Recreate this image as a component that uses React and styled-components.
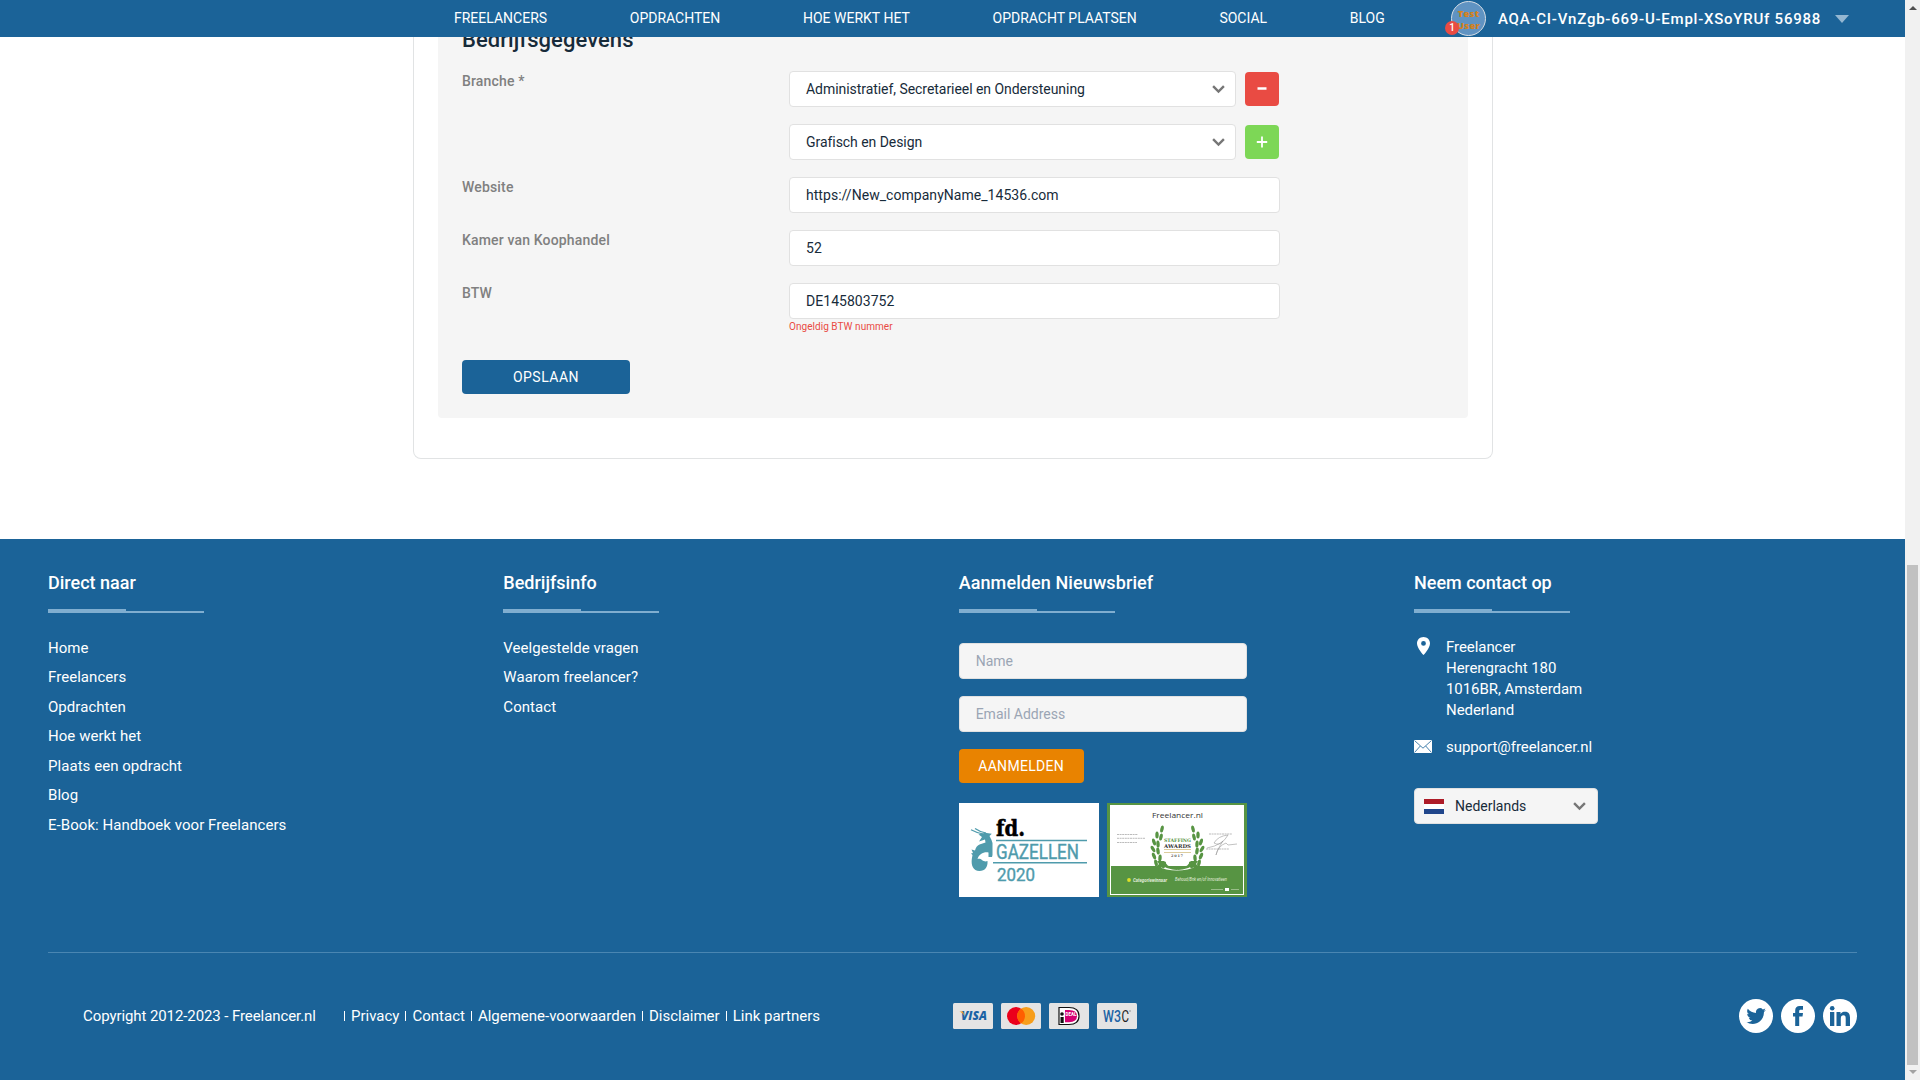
import React from 'react';
import styled, { createGlobalStyle } from 'styled-components';

const Global = createGlobalStyle`
  * { box-sizing: border-box; }
  html, body { margin: 0; padding: 0; }
  body { font-family: Roboto, "Liberation Sans", sans-serif; background: #fff; overflow: hidden; }
  button, input { font-family: inherit; }
`;

const Screen = styled.div`
  width: 1920px;
  height: 1080px;
  display: flex;
  overflow: hidden;
`;

const Page = styled.div`
  width: 1905px;
  height: 1080px;
  display: flex;
  flex-direction: column;
`;

const Header = styled.header`
  flex: none;
  height: 37px;
  background: #1b6398;
  display: flex;
  align-items: center;
  padding-left: 454px;
  position: relative;
  z-index: 2;
`;

const Nav = styled.nav`
  display: flex;
  gap: 82.7px;
  width: 997px;
  margin-bottom: 1px;
`;

const NavLink = styled.a`
  color: #fff;
  font-size: 14px;
  line-height: 20px;
  white-space: nowrap;
`;

const UserBox = styled.div`
  display: flex;
  align-items: center;
`;

const Avatar = styled.div`
  position: relative;
  width: 35px;
  height: 35px;
  border-radius: 50%;
  border: 1px solid #d6dde4;
  background: #6093c2;
  color: #d5811c;
  font: 800 9.5px/12px "Open Sans", sans-serif;
  letter-spacing: 0.2px;
  text-align: center;
  padding-top: 6px;
`;

const Badge = styled.span`
  position: absolute;
  left: -7px;
  top: 19px;
  width: 14px;
  height: 14px;
  border-radius: 50%;
  background: #e94b43;
  color: #fff;
  font: 500 10px/14px Roboto, sans-serif;
  letter-spacing: 0;
`;

const UserName = styled.span`
  margin-left: 12px;
  width: 324px;
  white-space: nowrap;
  color: #fff;
  font-size: 15px;
  font-weight: 500;
  letter-spacing: 0.76px;
`;

const Caret = styled.span`
  margin-left: 13px;
  margin-top: 1px;
  border: 7px solid transparent;
  border-top: 8px solid #94b7d2;
  border-bottom: 0;
`;

const Main = styled.main`
  flex: none;
  height: 502px;
  padding-left: 413px;
`;

const Card = styled.section`
  width: 1080px;
  height: 422px;
  border: 1px solid #e1e3e4;
  border-top: 0;
  border-radius: 0 0 8px 8px;
  padding: 0 24px;
`;

const Panel = styled.div`
  display: flow-root;
  height: 381px;
  background: #f5f5f5;
  border-radius: 0 0 4px 4px;
  padding: 0 24px;
`;

const Heading = styled.h2`
  margin: -12px 0 0;
  height: 46px;
  font-size: 22px;
  line-height: 30px;
  font-weight: 500;
  letter-spacing: 0.06px;
  color: #172b3a;
`;

const Row = styled.div`
  display: flex;
  align-items: flex-start;
  margin-bottom: 17px;
`;

const Label = styled.label`
  width: 327px;
  color: #808080;
  font-size: 14px;
  line-height: 20px;
  font-weight: 500;
  letter-spacing: 0.16px;
`;

const Control = styled.div`
  display: flex;
  align-items: center;
  justify-content: space-between;
  width: ${(p) => (p.$short ? 447 : 491)}px;
  height: 36px;
  border: 1px solid #e1e1e1;
  border-radius: 4px;
  background: #fff;
  color: #172b3a;
  font-size: 14px;
  letter-spacing: ${(p) => (p.$short ? -0.05 : 0.04)}px;
  padding: 0 10px 0 16px;
`;

const SquareButton = styled.button`
  width: 34px;
  height: 34px;
  margin: 1px 0 0 9px;
  border: 0;
  border-radius: 4px;
  background: ${(p) => p.$color};
  display: flex;
  align-items: center;
  justify-content: center;
  padding: 0;
`;

const ErrorRow = styled.div`
  margin: -15px 0 0 327px;
  height: 39px;
  color: #e94b43;
  font-size: 10px;
  line-height: 12px;
  letter-spacing: 0.05px;
`;

const ActionButton = styled.button`
  display: block;
  width: ${(p) => p.$width}px;
  height: 34px;
  border: 0;
  border-radius: 4px;
  background: ${(p) => p.$color};
  color: #fff;
  font-size: 14px;
  letter-spacing: ${(p) => p.$spacing}px;
  padding: 0;
`;

const Footer = styled.footer`
  flex: none;
  height: 541px;
  background: #1b6398;
  color: #fff;
  padding: 32px 48px 0;
`;

const Columns = styled.div`
  display: grid;
  grid-template-columns: repeat(4, 455.33px);
  height: 381px;
`;

const Column = styled.div`
  display: flex;
  flex-direction: column;
  align-items: flex-start;
`;

const Title = styled.h3`
  margin: 0;
  font-size: 18px;
  line-height: 24px;
  font-weight: 500;
  letter-spacing: ${(p) => p.$spacing || 0}px;
`;

const Rule = styled.div`
  width: 156px;
  height: 4px;
  margin-top: 14px;
  border-bottom: 2px solid #80aed0;
  &::before {
    content: '';
    display: block;
    width: 78px;
    height: 2px;
    background: #80aed0;
  }
`;

const Links = styled.div`
  display: flex;
  flex-direction: column;
  padding-top: 20.6px;
`;

const FooterLink = styled.a`
  color: #fff;
  font-size: 15px;
  line-height: 29.5px;
  letter-spacing: 0.05px;
`;

const Field = styled.input`
  width: 288px;
  height: 36px;
  margin-bottom: 17px;
  border: 1px solid #e1e1e1;
  border-radius: 4px;
  background: #f5f5f5;
  font-size: 14px;
  padding: 0 16px;
  &::placeholder { color: #9ba5b4; opacity: 1; }
`;

const Newsletter = styled.form`
  display: flex;
  flex-direction: column;
  align-items: flex-start;
  padding-top: 30px;
`;

const Awards = styled.div`
  display: flex;
  gap: 8px;
  margin-top: 20px;
`;

const Contact = styled.div`
  display: grid;
  grid-template-columns: 32px auto;
  font-size: 15px;
  line-height: 21px;
  letter-spacing: -0.06px;
  margin-top: ${(p) => p.$gap}px;
  svg { margin-top: ${(p) => p.$icon}px; }
`;

const Language = styled.div`
  display: flex;
  align-items: center;
  width: 184px;
  height: 36px;
  margin-top: 30px;
  padding: 0 11px 0 9px;
  border: 1px solid #e1e1e1;
  border-radius: 4px;
  background: #f5f5f5;
  color: #172b3a;
  font-size: 14px;
  span { flex: 1; padding-left: 11px; }
`;

const Bottom = styled.div`
  display: flex;
  align-items: center;
  height: 127px;
  border-top: 1px solid #4a86b2;
  padding-left: 35px;
`;

const Copyright = styled.div`
  width: 261px;
  font-size: 15px;
  letter-spacing: -0.09px;
  white-space: nowrap;
`;

const Legal = styled.div`
  display: flex;
  width: 609px;
  font-size: 15px;
`;

const LegalLink = styled.a`
  display: flex;
  align-items: center;
  white-space: nowrap;
  margin-right: 6px;
  &::before {
    content: '';
    width: 1px;
    height: 10px;
    margin-right: 6px;
    background: #fff;
  }
`;

const Payments = styled.div`
  display: flex;
  gap: 8px;
  flex: 1;
  svg { display: block; }
`;

const Social = styled.div`
  display: flex;
  gap: 8px;
  svg { display: block; }
`;

const Scrollbar = styled.div`
  width: 15px;
  height: 1080px;
  background: #f1f1f1;
  display: flex;
  flex-direction: column;
  align-items: center;
`;

const Arrow = styled.i`
  border: 4px solid transparent;
  ${(p) => (p.$up
    ? 'border-top: 0; border-bottom-color: #505050; border-bottom-width: 4px; margin-top: 6px;'
    : 'border-bottom: 0; border-top-color: #a3a3a3; margin-top: 5px;')}
`;

const Thumb = styled.div`
  width: 11px;
  height: 500px;
  margin-top: 555px;
  background: #c1c1c1;
`;

const Chevron = () => (
  <svg width="13" height="10" viewBox="0 0 13 10" fill="none" stroke="#767676" strokeWidth="2.4">
    <path d="M1.100 2.200 6.500 7.600 11.900 2.200" />
  </svg>
);

const GazellenLogo = () => (
  <svg width="140" height="94" viewBox="0 0 140 94">
    <rect width="140" height="94" fill="#fff" />
    <text x="37" y="33" fontFamily="DejaVu Serif, serif" fontWeight="700" fontSize="23" stroke="#000" strokeWidth=".5" textLength="29" lengthAdjust="spacingAndGlyphs">fd.</text>
    <path d="M37 37.500H128M34 59.700H128" stroke="#4f9bac" strokeWidth="1.600" />
    <g fill="#4f9bac" fontFamily="Roboto, sans-serif" fontWeight="400" fontSize="20" stroke="#4f9bac" strokeWidth=".4">
      <text x="37" y="56" textLength="83" lengthAdjust="spacingAndGlyphs">GAZELLEN</text>
      <text x="38" y="77.500" fontSize="18.500" textLength="38" lengthAdjust="spacingAndGlyphs">2020</text>
    </g>
    <path d="M12 26.800Q18 30 24 31M16 25.500Q21 29 27 30" fill="none" stroke="#4f9bac" strokeWidth="1.200" />
    <path fill="#4f9bac" d="M19.500 31.500 26 29.800 32.800 30.800 30.500 33 32.500 37 33.500 40V52L33 54H29.500V49.500C25 48.500 20 51 18.500 56C20 55.500 22 56 23 57C25 58.500 26.500 58.800 28.500 58C29 64 26 68 20.500 68C14 68 12 62 12.800 56L13.500 52 12 50.500 14 50 12.500 46.500 16 47.500Q17 43 20.500 41.500L26.500 39.500 26 36.500 20 38.500 23 34Z" />
  </svg>
);

const leaves = [[53, 66, 20], [49, 60, 5], [47, 53, -5], [46, 46, -12], [47, 39, 0], [50, 32, 18], [55, 26, 30], [57, 62, 35], [53, 55, 22], [51, 48, 10], [51, 41, 15], [54, 34, 30]];

const StaffingAward = () => (
  <svg width="140" height="94" viewBox="0 0 140 94">
    <rect width="140" height="94" fill="#579443" />
    <rect x="3.500" y="2.500" width="133" height="89" fill="none" stroke="#fff" strokeWidth="1" />
    <rect x="4" y="3" width="132" height="60" fill="#fff" />
    <text x="45" y="15" fontFamily="Open Sans, sans-serif" fontSize="8" fill="#333" textLength="51" lengthAdjust="spacingAndGlyphs">Freelancer.nl</text>
    <path d="M52 57Q70 76 88 57L91 63Q70 72 49 63Z" fill="#fff" />
    {[false, true].map((flip) => (
      <g key={String(flip)} fill="#579443" transform={flip ? 'matrix(-1 0 0 1 141 0)' : undefined}>
        {leaves.map(([x, y, a]) => (
          <ellipse key={`${x}-${y}`} cx={x} cy={y} rx="1.700" ry="3.600" transform={`rotate(${a - 18} ${x} ${y})`} />
        ))}
        <path d="M53 57Q60 64 70.500 65V67Q60 67 51 60ZM50 58H57L62 64H49L52 61Z" />
      </g>
    ))}
    <g textAnchor="middle" fontFamily="DejaVu Serif, serif" fontWeight="700">
      <text x="70.500" y="39" fontSize="4.800" fill="#579443" textLength="27" lengthAdjust="spacingAndGlyphs">STAFFING</text>
      <text x="70.500" y="44.700" fontSize="5.200" fill="#333" textLength="27" lengthAdjust="spacingAndGlyphs">AWARDS</text>
      <text x="70" y="54" fontSize="3.500" fill="#555" textLength="12">2017</text>
    </g>
    <path d="M57 46.500H84M57 49.500H84" stroke="#c5a95b" strokeWidth=".6" />
    <path d="M10 31.500H31M10 35.300H38M10 39.500H30M102 31H125M99 46H122" stroke="#aaa" strokeWidth=".8" strokeDasharray="2 .6" />
    <path d="M100 45Q116 42 121 32Q111 33 107 40Q112 43 116 38Q110 47 109 52Q111 43 119 40L121 42 130 41" fill="none" stroke="#999" strokeWidth=".6" />
    <circle cx="22" cy="77" r="1.900" fill="#dddf27" />
    <g fill="#e1ecdc" fontFamily="Roboto, sans-serif" fontStyle="italic">
      <text x="26" y="78.500" fontSize="4.700" fontWeight="700" textLength="34" lengthAdjust="spacingAndGlyphs">Categoriewinnaar</text>
      <text x="68" y="78.300" fontSize="4.500" textLength="52" lengthAdjust="spacingAndGlyphs">Behoud/Bnk en/of Innovatieen</text>
    </g>
    <path d="M104 86.500H116M124 86.500H132" stroke="#a9c99c" strokeWidth=".8" />
    <path d="M118 85H122V88H118Z" fill="#fff" />
  </svg>
);

const CardBase = ({ children }) => (
  <svg width="40" height="26" viewBox="0 0 40 26">
    <rect width="40" height="26" rx="1.500" fill="#e4e4e4" />
    {children}
  </svg>
);

const fields = [
  ['Website', 'https://New_companyName_14536.com'],
  ['Kamer van Koophandel', '52'],
  ['BTW', 'DE145803752'],
];

export default function App() {
  return (
    <Screen>
      <Global />
      <Page>
        <Header>
          <Nav>
            {['FREELANCERS', 'OPDRACHTEN', 'HOE WERKT HET', 'OPDRACHT PLAATSEN', 'SOCIAL', 'BLOG'].map((t) => (
              <NavLink key={t}>{t}</NavLink>
            ))}
          </Nav>
          <UserBox>
            <Avatar>Test<br />User<Badge>1</Badge></Avatar>
            <UserName>AQA-CI-VnZgb-669-U-Empl-XSoYRUf 56988</UserName>
            <Caret />
          </UserBox>
        </Header>
        <Main>
          <Card>
            <Panel>
              <Heading>Bedrijfsgegevens</Heading>
              <Row>
                <Label>Branche *</Label>
                <Control $short>Administratief, Secretarieel en Ondersteuning<Chevron /></Control>
                <SquareButton $color="#e94b43" aria-label="Verwijderen">
                  <svg width="12" height="12" viewBox="0 0 12 12"><path d="M1.500 5.500H10.500" stroke="#fff" strokeWidth="2.500" /></svg>
                </SquareButton>
              </Row>
              <Row>
                <Label />
                <Control $short>Grafisch en Design<Chevron /></Control>
                <SquareButton $color="#7dd756" aria-label="Toevoegen">
                  <svg width="12" height="12" viewBox="0 0 12 12"><path d="M.8 6H11.200M6 .4V11.600" stroke="#fff" strokeWidth="1.800" /></svg>
                </SquareButton>
              </Row>
              {fields.map(([label, value]) => (
                <Row key={label}>
                  <Label>{label}</Label>
                  <Control>{value}</Control>
                </Row>
              ))}
              <ErrorRow>Ongeldig BTW nummer</ErrorRow>
              <ActionButton $width={168} $color="#1b6398" $spacing={0.5}>OPSLAAN</ActionButton>
            </Panel>
          </Card>
        </Main>
        <Footer>
          <Columns>
            <Column>
              <Title>Direct naar</Title>
              <Rule />
              <Links>
                {['Home', 'Freelancers', 'Opdrachten', 'Hoe werkt het', 'Plaats een opdracht', 'Blog', 'E-Book: Handboek voor Freelancers'].map((t) => (
                  <FooterLink key={t}>{t}</FooterLink>
                ))}
              </Links>
            </Column>
            <Column>
              <Title>Bedrijfsinfo</Title>
              <Rule />
              <Links>
                {['Veelgestelde vragen', 'Waarom freelancer?', 'Contact'].map((t) => (
                  <FooterLink key={t}>{t}</FooterLink>
                ))}
              </Links>
            </Column>
            <Column>
              <Title $spacing={0.1}>Aanmelden Nieuwsbrief</Title>
              <Rule />
              <Newsletter>
                <Field placeholder="Name" />
                <Field placeholder="Email Address" />
                <ActionButton type="button" $width={125} $color="#e98300" $spacing={0.3}>AANMELDEN</ActionButton>
                <Awards>
                  <GazellenLogo />
                  <StaffingAward />
                </Awards>
              </Newsletter>
            </Column>
            <Column>
              <Title>Neem contact op</Title>
              <Rule />
              <Contact $gap={24} $icon={0}>
                <svg width="18" height="18" viewBox="0 0 18 18">
                  <path fill="#fff" fillRule="evenodd" d="M9.500 0C5.800 0 3 2.800 3 6.400 3 11 9.500 18 9.500 18S16 11 16 6.400C16 2.800 13.200 0 9.500 0ZM9.500 4A2.400 2.400 0 1 1 9.500 8.800 2.400 2.400 0 0 1 9.500 4Z" />
                </svg>
                <div>Freelancer<br />Herengracht 180<br />1016BR, Amsterdam<br />Nederland</div>
              </Contact>
              <Contact $gap={16} $icon={3}>
                <svg width="18" height="13" viewBox="0 0 18 13">
                  <rect width="18" height="13" rx="1" fill="#fff" />
                  <path d="M.8.8 9 8.200 17.200.8M.8 12.200 6.300 6M17.200 12.200 11.700 6" fill="none" stroke="#1b6398" strokeWidth=".8" />
                </svg>
                <div>support@freelancer.nl</div>
              </Contact>
              <Language>
                <svg width="20" height="15" viewBox="0 0 20 15">
                  <path fill="#ae1c28" d="M0 0H20V5H0Z" />
                  <path fill="#fff" d="M0 5H20V10H0Z" />
                  <path fill="#21468b" d="M0 10H20V15H0Z" />
                </svg>
                <span>Nederlands</span>
                <Chevron />
              </Language>
            </Column>
          </Columns>
          <Bottom>
            <Copyright>Copyright 2012-2023 - Freelancer.nl</Copyright>
            <Legal>
              {['Privacy', 'Contact', 'Algemene-voorwaarden', 'Disclaimer', 'Link partners'].map((t) => (
                <LegalLink key={t}>{t}</LegalLink>
              ))}
            </Legal>
            <Payments>
              <CardBase>
                <text x="8" y="17.300" fontFamily="Open Sans, sans-serif" fontWeight="800" fontStyle="italic" fontSize="12" fill="#1b63a5" textLength="26" lengthAdjust="spacingAndGlyphs">VISA</text>
                <path d="M6.500 8.400H10L11.500 13Q10 9.800 6.500 8.400Z" fill="#f2a02b" />
              </CardBase>
              <CardBase>
                <circle cx="15" cy="13" r="9" fill="#eb001b" />
                <circle cx="25.200" cy="13" r="9" fill="#f79e1b" />
                <path d="M20.100 5.600A9 9 0 0 1 20.100 20.400 9 9 0 0 1 20.100 5.600Z" fill="#ff5f00" />
              </CardBase>
              <CardBase>
                <path d="M10 4.500H20Q30 4.500 30 13T20 21.500H10Z" fill="#fff" stroke="#111" strokeWidth="1.200" />
                <path d="M16 7H20Q28 7 28 13T20 19.300H16Z" fill="#d50072" />
                <circle cx="13" cy="11" r="1.800" fill="#111" />
                <path d="M11.500 14H14.700V20H11.500Z" fill="#111" />
                <text x="16.500" y="13" fontFamily="Roboto, sans-serif" fontWeight="700" fontSize="4.500" fill="#fff" textLength="11">DEAL</text>
              </CardBase>
              <CardBase>
                <text transform="translate(6 18.800) scale(.75 1)" fontFamily="Roboto, sans-serif" fontSize="16.500" fontWeight="500" fill="#1b63a5">W3</text>
                <text transform="translate(24.500 18.800) scale(.7 1)" fontFamily="Roboto, sans-serif" fontSize="16.500" fill="#222">C</text>
                <circle cx="33" cy="8" r=".8" fill="#888" />
              </CardBase>
            </Payments>
            <Social>
              <svg width="34" height="34" viewBox="0 0 34 34">
                <circle cx="17" cy="17" r="17" fill="#fff" />
                <path transform="translate(7.500 7.300) scale(.81)" fill="#1b6398" d="M23.950 4.570a10 10 0 0 1-2.820.770 4.960 4.960 0 0 0 2.160-2.720c-.95.550-2 .950-3.130 1.180a4.920 4.920 0 0 0-8.380 4.480C7.690 8.100 4.070 6.130 1.640 3.160a4.920 4.920 0 0 0 1.520 6.570 4.900 4.900 0 0 1-2.230-.610v.060a4.920 4.920 0 0 0 3.950 4.830 5 5 0 0 1-2.210.080 4.940 4.940 0 0 0 4.600 3.420A9.870 9.870 0 0 1 0 19.540a14 14 0 0 0 7.550 2.210c9.050 0 14-7.500 14-13.980 0-.210 0-.420-.020-.630a10 10 0 0 0 2.460-2.550z" />
              </svg>
              <svg width="34" height="34" viewBox="0 0 34 34">
                <circle cx="17" cy="17" r="17" fill="#fff" />
                <path fill="#1b6398" d="M14.200 27V17.500H12V14H14.200V11.500C14.200 8.500 15.700 7 18.700 7H22V10.700H19.800C18.500 10.700 18.200 11.200 18.200 12.200V14H22L21.500 17.500H18.200V27Z" />
              </svg>
              <svg width="34" height="34" viewBox="0 0 34 34">
                <circle cx="17" cy="17" r="17" fill="#fff" />
                <circle cx="9.200" cy="9.200" r="2.300" fill="#1b6398" />
                <path fill="#1b6398" d="M7 13H11.300V27H7ZM13.500 13H17.500V15C18.500 13.300 20 12.700 22 12.700C26 12.700 27 15.300 27 19V27H22.700V19.500C22.700 17.700 22.300 16.300 20.500 16.300C18.500 16.300 17.800 17.700 17.800 19.500V27H13.500Z" />
              </svg>
            </Social>
          </Bottom>
        </Footer>
      </Page>
      <Scrollbar>
        <Arrow $up />
        <Thumb />
        <Arrow />
      </Scrollbar>
    </Screen>
  );
}
